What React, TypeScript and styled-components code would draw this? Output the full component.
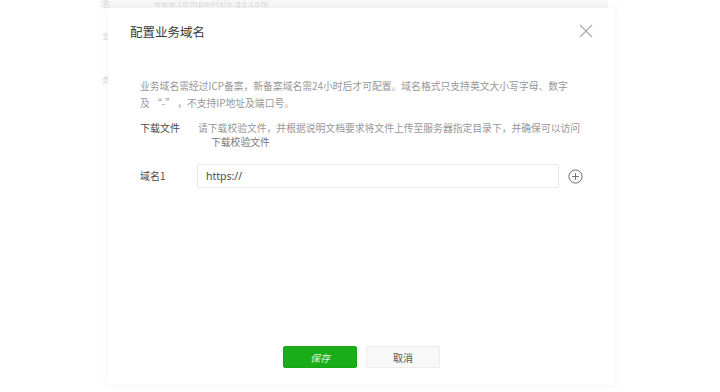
import styled, { createGlobalStyle } from 'styled-components';

const GlobalStyle = createGlobalStyle`
  html, body {
    margin: 0;
    padding: 0;
    background: #ffffff;
    font-family: "Noto Sans CJK SC", "Noto Sans", "Liberation Sans", sans-serif;
  }
  #root {
    width: 720px;
    height: 392px;
    overflow: hidden;
    position: relative;
  }
`;

export default function App() {
  return (
    <>
      <GlobalStyle />
      <Page>
        <TopStrip>
          <FadedLabel>名</FadedLabel>
          <FadedUrl>www.tmmpweixin.qq.com</FadedUrl>
        </TopStrip>
        <FadedLabel $top={24}>五</FadedLabel>
        <FadedLabel $top={36}>务</FadedLabel>
      </Page>

      <Dialog>
        <Header>
          <Title>配置业务域名</Title>
          <CloseButton aria-label="关闭">
            <svg width="14" height="14" viewBox="0 0 14 14">
              <path d="M1 1 L13 13 M13 1 L1 13" stroke="#a8a8a8" strokeWidth="1.1" fill="none" />
            </svg>
          </CloseButton>
        </Header>

        <Body>
          <Notice>
            业务域名需经过ICP备案，新备案域名需24小时后才可配置。域名格式只支持英文大小写字母、数字
            <br />
            及&nbsp;“-”&nbsp;，不支持IP地址及端口号。
          </Notice>

          <FormRow $gap={9}>
            <Label>下载文件</Label>
            <Field>
              <Tip>请下载校验文件，并根据说明文档要求将文件上传至服务器指定目录下，并确保可以访问</Tip>
              <DownloadLink>下载校验文件</DownloadLink>
            </Field>
          </FormRow>

          <FormRow $gap={15} $center>
            <Label>域名1</Label>
            <InputWrap>
              <Input defaultValue="https://" />
              <AddButton aria-label="添加">
                <svg width="15" height="15" viewBox="0 0 15 15">
                  <circle cx="7.5" cy="7.5" r="6.6" stroke="#6f6f6f" strokeWidth="1" fill="none" />
                  <path d="M7.5 4.2 V10.8 M4.2 7.5 H10.8" stroke="#6f6f6f" strokeWidth="1" />
                </svg>
              </AddButton>
            </InputWrap>
          </FormRow>
        </Body>

        <Footer>
          <PrimaryButton>保存</PrimaryButton>
          <DefaultButton>取消</DefaultButton>
        </Footer>
      </Dialog>
    </>
  );
}

const Page = styled.div`
  display: flex;
  flex-direction: column;
  padding-left: 100px;
  height: 392px;
  box-sizing: border-box;
`;

const TopStrip = styled.div`
  width: 508px;
  height: 8px;
  background: #f7f7f7;
  display: flex;
  align-items: center;
  gap: 44px;
`;

const FadedLabel = styled.div<{ $top?: number }>`
  font-size: 8px;
  line-height: 8px;
  color: #d6d6d6;
  margin-left: 2px;
  margin-top: ${(p) => p.$top ?? 0}px;
`;

const FadedUrl = styled.div`
  font-size: 8px;
  line-height: 8px;
  color: #dadada;
  letter-spacing: 0.8px;
`;

const Dialog = styled.div`
  position: absolute;
  left: 108px;
  top: 8px;
  width: 507px;
  height: 377px;
  background: #ffffff;
  border-radius: 2px;
  box-shadow: 0 0 6px 2px rgba(0, 0, 0, 0.035);
  display: flex;
  flex-direction: column;
`;

const Header = styled.div`
  height: 46px;
  padding: 0 22px;
  display: flex;
  align-items: center;
  justify-content: space-between;
`;

const Title = styled.h3`
  margin: 0;
  font-size: 12.5px;
  font-weight: 400;
  color: #3a3a3a;
`;

const CloseButton = styled.button`
  border: none;
  background: none;
  padding: 0;
  width: 14px;
  height: 14px;
  display: flex;
  cursor: pointer;
`;

const Body = styled.div`
  flex: 1;
  padding: 24px 32px 0;
  display: flex;
  flex-direction: column;
`;

const Notice = styled.p`
  margin: 0;
  font-size: 9.8px;
  line-height: 17px;
  color: #979797;
  white-space: nowrap;
`;

const FormRow = styled.div<{ $gap: number; $center?: boolean }>`
  display: flex;
  align-items: ${(p) => (p.$center ? 'center' : 'flex-start')};
  margin-top: ${(p) => p.$gap}px;
`;

const Label = styled.div`
  width: 58px;
  flex-shrink: 0;
  font-size: 10px;
  line-height: 14px;
  color: #4a4a4a;
`;

const Field = styled.div`
  display: flex;
  flex-direction: column;
`;

const Tip = styled.div`
  font-size: 9.8px;
  line-height: 14px;
  color: #979797;
  white-space: nowrap;
`;

const DownloadLink = styled.a`
  font-size: 9.8px;
  line-height: 14px;
  color: #777777;
  margin-left: 13px;
  cursor: pointer;
`;

const InputWrap = styled.div`
  display: flex;
  align-items: center;
  gap: 9px;
  margin-left: -1px;
`;

const Input = styled.input`
  width: 362px;
  height: 24px;
  box-sizing: border-box;
  border: 1px solid #e7e7e7;
  border-radius: 2px;
  padding: 0 8px;
  font-family: "Noto Sans", "Liberation Sans", sans-serif;
  font-size: 10.5px;
  color: #4a4a4a;
  outline: none;
  background: #fff;
`;

const AddButton = styled.button`
  border: none;
  background: none;
  padding: 0;
  width: 15px;
  height: 15px;
  display: flex;
  cursor: pointer;
`;

const Footer = styled.div`
  display: flex;
  justify-content: center;
  gap: 9px;
  padding-bottom: 17px;
`;

const BaseButton = styled.button`
  width: 74px;
  height: 22px;
  border-radius: 2px;
  font-family: "Noto Sans CJK SC", sans-serif;
  font-size: 10px;
  cursor: pointer;
  padding: 0;
`;

const PrimaryButton = styled(BaseButton)`
  background: #1aad19;
  border: 1px solid #17a417;
  color: #d9f3d9;
  font-style: italic;
`;

const DefaultButton = styled(BaseButton)`
  background: #f8f8f8;
  border: 1px solid #ececec;
  color: #555555;
`;
